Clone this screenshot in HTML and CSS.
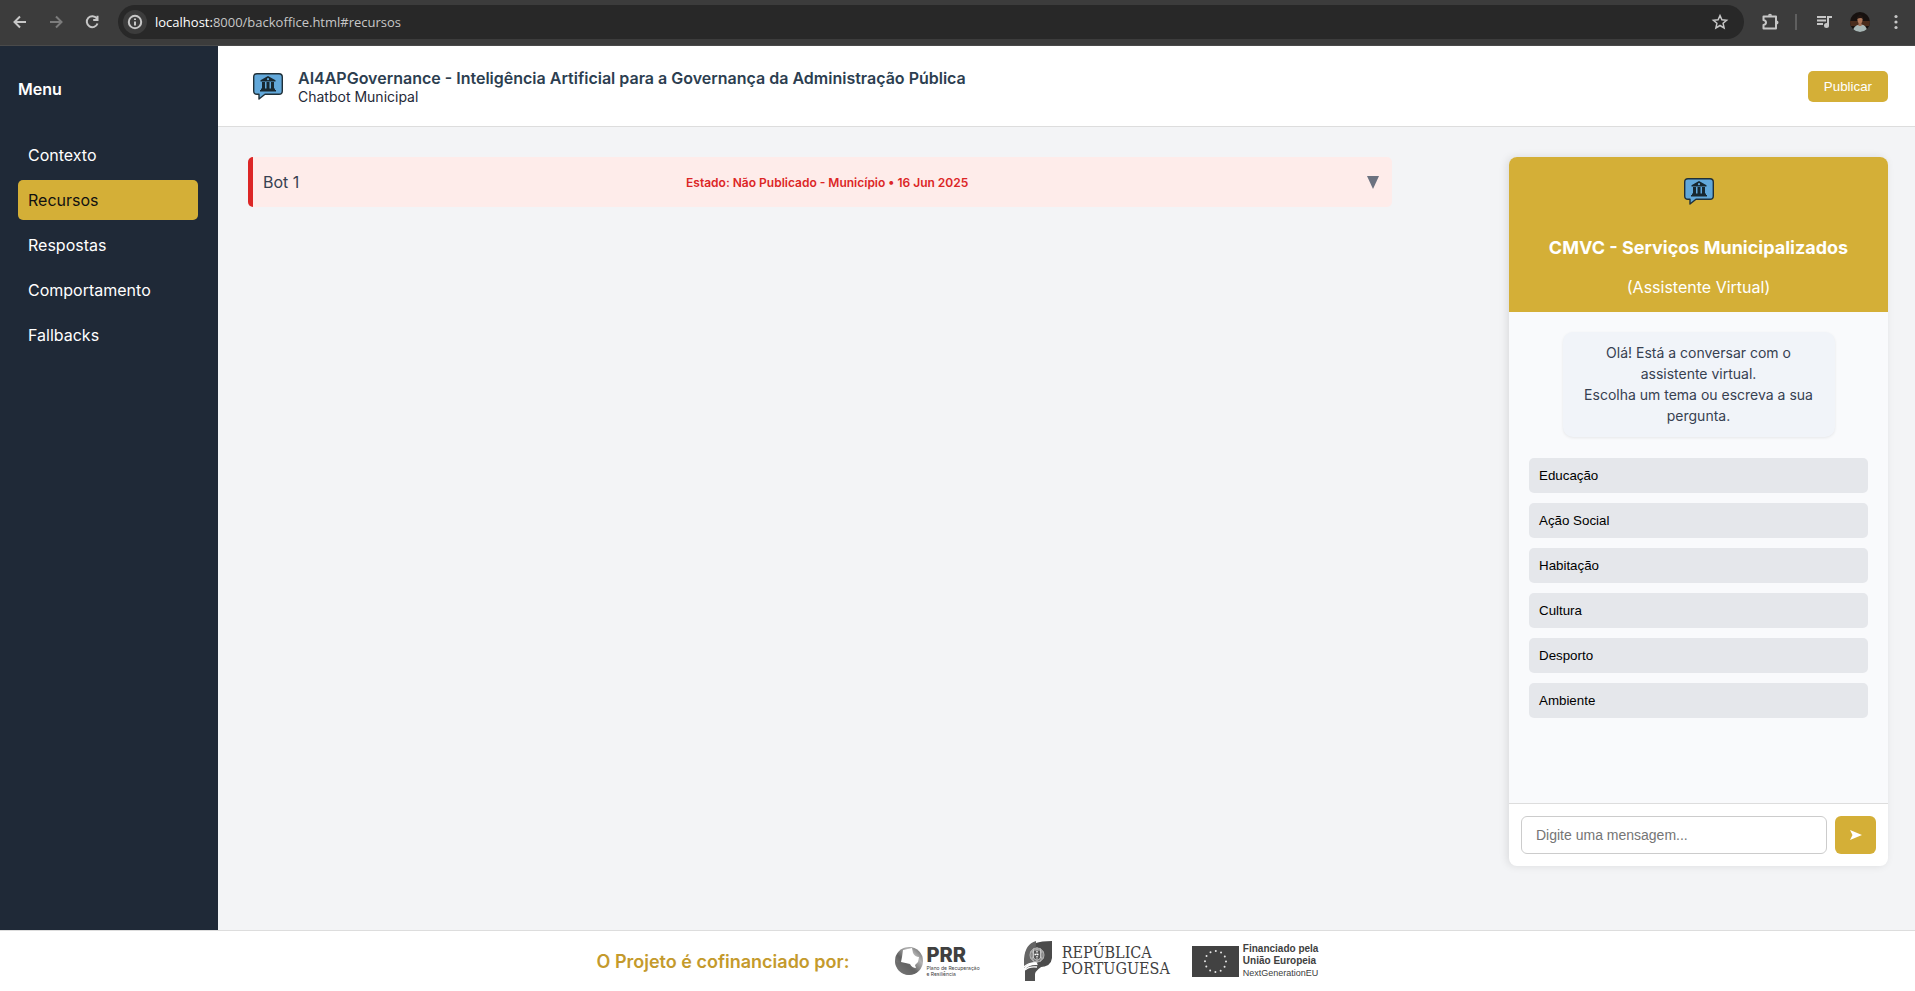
FILE: index.html
```html
<!DOCTYPE html>
<html lang="pt">
<head>
<meta charset="utf-8">
<title>Backoffice - Chatbot Municipal</title>
<link rel="stylesheet" href="styles.css">
</head>
<body>
<svg class="defs" aria-hidden="true">
  <symbol id="bot" viewBox="0 0 30 27">
    <path d="M4 .7H26Q29.300 .7 29.300 4V18Q29.300 21.300 26 21.300H12L6 26V21.300H4Q.7 21.300 .7 18V4Q.7 .7 4 .7Z" fill="#62a8da" stroke="#203038" stroke-width="1.400" stroke-linejoin="round"/>
    <path d="M15 3L22.500 7.200V8.500H7.500V7.200ZM9 9h3v7h-3zM13.500 9h3v7h-3zM18 9h3v7h-3zM8 15.500h14v1.500H8zM7 17h16v1.500H7z" fill="#182830"/>
    <circle cx="15" cy="6.200" r="1.100" fill="#62a8da"/>
  </symbol>
</svg>

<div class="toolbar">
  <button class="tool" aria-label="Voltar"><svg width="24" height="24" viewBox="0 0 24 24"><path d="M18 12H7M12 6.500L6.500 12L12 17.500"/></svg></button>
  <button class="tool dim" aria-label="Avançar"><svg width="24" height="24" viewBox="0 0 24 24"><path d="M6 12h11M12 6.500L17.500 12L12 17.500"/></svg></button>
  <button class="tool" aria-label="Recarregar"><svg width="24" height="24" viewBox="0 0 24 24"><path d="M16.800 8.500A5.500 5.500 0 1 0 17.500 13.500M17.500 5.800V10H13.200"/></svg></button>
  <div class="address">
    <button class="info" aria-label="Informações do site"><svg width="24" height="24" viewBox="0 0 24 24"><circle cx="12" cy="12" r="6.200"/><path d="M12 11.500V15.500M12 8.600V10"/></svg></button>
    <span class="url"><b>localhost:</b>8000/backoffice.html#recursos</span>
    <button class="tool star" aria-label="Favorito"><svg width="24" height="24" viewBox="0 0 24 24"><path d="M12 5.500L13.900 9.800L18.600 10.300L15.100 13.300L16.100 18L12 15.500L7.900 18L8.900 13.300L5.400 10.300L10.100 9.800Z"/></svg></button>
  </div>
  <button class="tool ext" aria-label="Extensões"><svg width="24" height="24" viewBox="0 0 24 24"><path d="M5.500 6.500H18V18.500H5.500V15Q8 14.500 8 12.500T5.500 10Z" stroke-linejoin="round"/><path d="M10 5.800a2 2 0 0 1 4 0zM18.500 10.500a2 2 0 0 1 0 4z" fill="#c7c7c7" stroke="none"/></svg></button>
  <span class="divider"></span>
  <button class="tool media" aria-label="Multimédia"><svg width="24" height="24" viewBox="0 0 24 24"><path d="M5 7H14M5 10.500H14M5 14H11M16 15.500V7H20"/><circle cx="14.500" cy="15.500" r="2.500" fill="#c7c7c7" stroke="none"/></svg></button>
  <button class="avatar" aria-label="Perfil"><svg width="20" height="20" viewBox="0 0 20 20"><defs><clipPath id="face"><circle cx="10" cy="10" r="10"/></clipPath></defs><g clip-path="url(#face)"><path d="M0 0h20v20H0z" fill="#17110f"/><path d="M0 9h20v5H0z" fill="#4a2c1c"/><path d="M3 20Q3 13 10 12.500T17 20z" fill="#a9b8b7"/><path d="M8.500 10h3v4h-3z" fill="#a06f56"/><ellipse cx="10" cy="7.500" rx="2.600" ry="3.700" fill="#ad7659"/><path d="M7 7Q7 3 10 3t3 4Q11 5 7 7z" fill="#211612"/></g></svg></button>
  <button class="tool more" aria-label="Mais"><svg width="24" height="24" viewBox="0 0 24 24"><g fill="#c7c7c7" stroke="none"><circle cx="12" cy="6.500" r="1.600"/><circle cx="12" cy="12" r="1.600"/><circle cx="12" cy="17.500" r="1.600"/></g></svg></button>
</div>

<div class="app">
  <aside class="sidebar">
    <h2>Menu</h2>
    <nav>
      <a href="#contexto">Contexto</a>
      <a href="#recursos" class="active">Recursos</a>
      <a href="#respostas">Respostas</a>
      <a href="#comportamento">Comportamento</a>
      <a href="#fallbacks">Fallbacks</a>
    </nav>
  </aside>
  <div class="content">
    <header class="header">
      <svg class="logo" width="30" height="27"><use href="#bot"/></svg>
      <div class="titles">
        <h1>AI4APGovernance - Inteligência Artificial para a Governança da Administração Pública</h1>
        <p>Chatbot Municipal</p>
      </div>
      <button class="publish">Publicar</button>
    </header>
    <main class="main">
      <section class="bots">
        <button class="bot-row">
          <span class="bot-name">Bot 1</span>
          <span class="bot-state">Estado: Não Publicado - Município • 16 Jun 2025</span>
          <span class="bot-toggle"><svg width="12" height="13" viewBox="0 0 12 13"><path d="M0 0h12L6 13z" fill="#6b7280"/></svg></span>
        </button>
      </section>
      <section class="chat">
        <div class="chat-head">
          <svg width="30" height="27"><use href="#bot"/></svg>
          <h2>CMVC - Serviços Municipalizados</h2>
          <p>(Assistente Virtual)</p>
        </div>
        <div class="chat-body">
          <p class="bubble">Olá! Está a conversar com o assistente virtual.<br>Escolha um tema ou escreva a sua pergunta.</p>
          <div class="topics">
            <button>Educação</button>
            <button>Ação Social</button>
            <button>Habitação</button>
            <button>Cultura</button>
            <button>Desporto</button>
            <button>Ambiente</button>
          </div>
        </div>
        <form class="composer">
          <input type="text" aria-label="Mensagem" placeholder="Digite uma mensagem...">
          <button type="button" aria-label="Enviar"><svg width="12" height="10" viewBox="0 0 12 10"><path d="M0 0L12 5L0 10L2.500 5z" fill="#fff"/></svg></button>
        </form>
      </section>
    </main>
  </div>
</div>

<footer class="footer">
  <p class="funding">O Projeto é cofinanciado por:</p>
  <div class="prr">
    <svg width="28" height="28" viewBox="0 0 28 28"><defs><linearGradient id="globe" x1="0" y1="1" x2="1" y2="0"><stop offset="0" stop-color="#9b9b9b"/><stop offset=".4" stop-color="#606060"/><stop offset=".7" stop-color="#b5b5b5"/><stop offset="1" stop-color="#555"/></linearGradient></defs><circle cx="14" cy="14" r="14" fill="url(#globe)"/><path d="M0 14Q1 25 12 28Q20 28 23 24L8 15Q3 17 0 14Z" fill="#666" opacity=".6"/><path d="M8 3L17 1L18 6Q20 10 24 10L23 15L20 18L21 21Q17 21 15 17L6 15L7 10Z" fill="#fff"/></svg>
    <div><strong>PRR</strong><small>Plano de Recuperação<br>e Resiliência</small></div>
  </div>
  <div class="republic">
    <svg width="29" height="40" viewBox="0 0 29 40"><path d="M0 27V18Q1 3 12 0V21Q4 22 0 27Z" fill="#656565"/><path d="M12 2Q17 0 28 0V17Q27 27 13 26Q15 23 11 20Z" fill="#4b4b4b"/><path d="M1 29Q4 24 12 24Q20 25 23 23Q12 28 11 33V40H1Z" fill="#505050"/><path d="M0 26Q5 21 13 22M1 29Q5 25 13 26" fill="none" stroke="#fff" stroke-width="1.300"/><circle cx="13" cy="14" r="7" fill="#777" stroke="#ccc" stroke-width=".8"/><path d="M6 11h14M6 17h14M10 7q-4 7 0 14M16 7q4 7 0 14M13 6v16" fill="none" stroke="#c0c0c0" stroke-width=".7"/><path d="M9.500 9h7v8q-3.500 4-7 0z" fill="#555" stroke="#ddd" stroke-width=".8"/><path d="M13 10v8M10.500 13.500h5" stroke="#fff" stroke-width="1.300" stroke-dasharray="1.500 1"/></svg>
    <div>REPÚBLICA<br>PORTUGUESA</div>
  </div>
  <div class="europe">
    <svg width="47" height="31" viewBox="0 0 47 31"><path d="M0 0h47v31H0z" fill="#424242"/><circle cx="23.500" cy="15.500" r="10.500" fill="none" stroke="#e6e6e6" stroke-width="2" stroke-linecap="round" stroke-dasharray="0 5.498"/></svg>
    <div><strong>Financiado pela<br>União Europeia</strong><small>NextGenerationEU</small></div>
  </div>
</footer>
</body>
</html>
```
FILE: styles.css
```css
* { box-sizing: border-box; }
html, body { height: 100%; }
body {
  margin: 0;
  display: flex;
  flex-direction: column;
  min-height: 100vh;
  background: #f3f4f6;
  color: #1f2937;
  font-family: Inter, sans-serif;
  font-size: 16px;
}
h1, h2, p { margin: 0; }
button { border: 0; padding: 0; font-family: "Liberation Sans", Arial, sans-serif; cursor: pointer; }
svg { display: block; flex: none; }
.defs { position: absolute; width: 0; height: 0; }

.toolbar {
  display: flex;
  align-items: center;
  height: 46px;
  flex: none;
  padding: 0 7px 2px 8px;
  background: #3c3c3c;
  border-bottom: 1px solid #4a4a4a;
}
.tool, .info { width: 24px; height: 24px; background: none; }
.toolbar .tool + .tool { margin-left: 12px; }
.toolbar svg { fill: none; stroke: #c7c7c7; stroke-width: 2; }
.toolbar .dim svg { stroke: #7c7c7c; }
.toolbar .star svg { stroke-width: 1.5; }
.toolbar .avatar svg { stroke: none; }
.address {
  flex: 1;
  display: flex;
  align-items: center;
  height: 34px;
  margin-left: 14px;
  padding: 0 12px 0 5px;
  border-radius: 17px;
  background: #282828;
}
.info { border-radius: 50%; background: #3c3c3c; }
.url {
  flex: 1;
  margin-left: 8px;
  color: #c7c7c7;
  font: 13px "Open Sans", sans-serif;
}
.url b { font-weight: 400; color: #fff; }
.ext { margin-left: 14px; }
.divider { width: 2px; height: 16px; margin: 0 15px 0 13px; background: #5f5f5f; }
.avatar { margin: 0 14px; background: none; }

.app { flex: 1; display: flex; min-height: 0; }
.sidebar { width: 218px; flex: none; padding: 32px 20px 20px 18px; background: #1f2937; color: #fff; }
.sidebar h2 { font-size: 16px; line-height: 22px; font-weight: 600; }
.sidebar nav { display: flex; flex-direction: column; gap: 5px; margin-top: 35px; }
.sidebar a {
  padding: 0 10px;
  border-radius: 5px;
  color: #fff;
  line-height: 40px;
  text-decoration: none;
}
.sidebar .active { background: #d4af37; color: #111; }

.content { flex: 1; min-width: 0; display: flex; flex-direction: column; }
.header {
  display: flex;
  align-items: center;
  height: 81px;
  flex: none;
  padding: 0 27px 0 35px;
  background: #fff;
  border-bottom: 1px solid #ddd;
}
.titles { flex: 1; margin-left: 15px; padding-top: 2px; }
.titles h1 { color: #2c3e50; font-size: 16px; line-height: 19px; font-weight: 600; }
.titles p { font-size: 14px; line-height: 18px; }
.publish {
  height: 31px;
  padding: 0 16px;
  border-radius: 5px;
  background: #d4af37;
  color: #fff;
}
.main { flex: 1; display: flex; align-items: flex-start; gap: 117px; padding: 30px 27px 0 30px; }
.bots { flex: 1; }
.bot-row {
  display: flex;
  align-items: center;
  justify-content: space-between;
  width: 100%;
  height: 50px;
  padding: 0 13px 0 10px;
  border-left: 5px solid #dc2626;
  border-radius: 5px;
  background: #feecea;
  font-family: Inter, sans-serif;
}
.bot-name { color: #374151; font-size: 16px; }
.bot-state { color: #dc2626; font-size: 12px; font-weight: 600; }
.bot-toggle { padding-left: 12px; }

.chat {
  display: flex;
  flex-direction: column;
  width: 379px;
  flex: none;
  border-radius: 8px;
  background: #fff;
  box-shadow: -2px 0 8px rgba(0, 0, 0, .1);
  overflow: hidden;
}
.chat-head {
  display: flex;
  flex-direction: column;
  align-items: center;
  padding: 21px 16px 14px;
  background: #d4af37;
  color: #fff;
}
.chat-head h2 { margin-top: 31px; font-size: 18px; line-height: 24px; font-weight: 700; }
.chat-head p { margin-top: 17px; font-size: 16px; line-height: 21px; }
.chat-body { min-height: 491px; padding: 20px; background: #f9fafc; }
.bubble {
  width: 272px;
  margin: 0 auto 21px;
  padding: 10px 16px 11px;
  border-radius: 10px;
  background: #f1f4f9;
  box-shadow: 0 1px 3px rgba(0, 0, 0, .08);
  color: #374151;
  font-size: 14px;
  line-height: 21px;
  text-align: center;
}
.topics { display: flex; flex-direction: column; gap: 10px; }
.topics button {
  height: 35px;
  padding: 0 10px;
  border-radius: 5px;
  background: #e5e7eb;
  color: #000;
  text-align: left;
}
.composer { display: flex; gap: 8px; padding: 12px; border-top: 1px solid #ddd; }
.composer input {
  flex: 1;
  min-width: 0;
  height: 38px;
  padding: 0 14px;
  border: 1px solid #ccc;
  border-radius: 6px;
  font: 14px "Liberation Sans", Arial, sans-serif;
}
.composer input::placeholder { color: #757575; }
.composer button { display: grid; place-items: center; width: 41px; border-radius: 6px; background: #d4af37; }

.footer {
  display: flex;
  align-items: center;
  justify-content: center;
  height: 61px;
  flex: none;
  background: #fff;
  border-top: 1px solid #ddd;
  color: #404040;
}
.funding { color: #c49a2c; font-size: 18px; font-weight: 600; }
.footer strong, .footer small { display: block; }
.prr, .republic, .europe { display: flex; align-items: center; }
.prr { margin-left: 46px; gap: 3px; }
.prr strong { font-size: 20px; line-height: 20px; font-weight: 800; }
.prr small { font-size: 5px; line-height: 6px; }
.republic { margin-left: 44px; gap: 9px; font: 16px/16px "DejaVu Serif Condensed", "DejaVu Serif", serif; }
.europe { margin-left: 22px; gap: 4px; font-family: "Liberation Sans", Arial, sans-serif; }
.europe strong { font-size: 10px; line-height: 12px; }
.europe small { font-size: 9px; line-height: 13px; }
```
